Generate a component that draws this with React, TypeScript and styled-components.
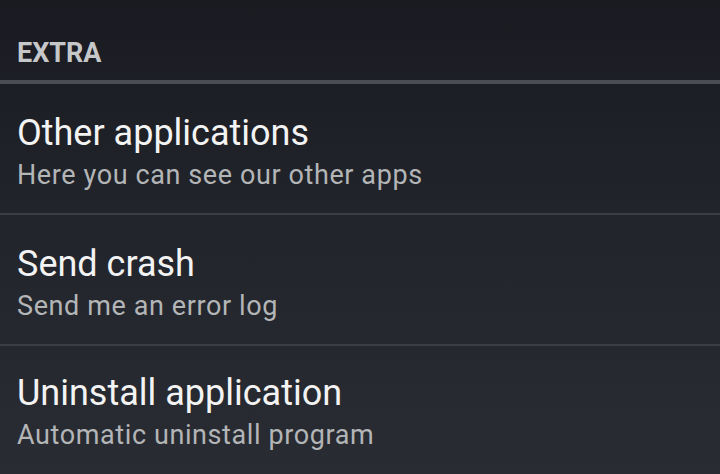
import styled, {createGlobalStyle} from 'styled-components';

const GlobalStyle = createGlobalStyle`
    html, body {
        margin: 0;
        padding: 0;
        background: #1a1c22;
    }
    body {
        font-family: Roboto, "Noto Sans", sans-serif;
    }
`;

const Screen = styled.div`
    width: 720px;
    height: 474px;
    overflow: hidden;
    background: linear-gradient(to bottom, #191b21 0%, #22252b 50%, #292c32 100%);
`;

const Category = styled.div`
    height: 84px;
    box-sizing: border-box;
    padding: 37px 17px 0;
    font-size: 27px;
    line-height: 32px;
    font-weight: 700;
    color: #c6c7c8;
    border-bottom: 4px solid #4a4d51;
`;

const Item = styled.div<{last?: boolean}>`
    height: 131px;
    box-sizing: border-box;
    padding: ${p => (p.last ? '27px' : '29px')} 17px 0;
    border-bottom: ${p => (p.last ? 'none' : '2px solid #3b3e43')};
`;

const Title = styled.div`
    font-size: 36px;
    line-height: 40px;
    color: #f3f3f3;
`;

const Summary = styled.div`
    margin-top: 6px;
    font-size: 27px;
    line-height: 32px;
    letter-spacing: 0.6px;
    color: #b3b5b7;
`;

const items = [
    {title: 'Other applications', summary: 'Here you can see our other apps'},
    {title: 'Send crash', summary: 'Send me an error log'},
    {title: 'Uninstall application', summary: 'Automatic uninstall program'},
];

export default function App() {
    return (
        <>
            <GlobalStyle/>
            <Screen>
                <Category>EXTRA</Category>
                {items.map((item, index) => (
                    <Item key={index} last={index === items.length - 1}>
                        <Title>{item.title}</Title>
                        <Summary>{item.summary}</Summary>
                    </Item>
                ))}
            </Screen>
        </>
    );
}
